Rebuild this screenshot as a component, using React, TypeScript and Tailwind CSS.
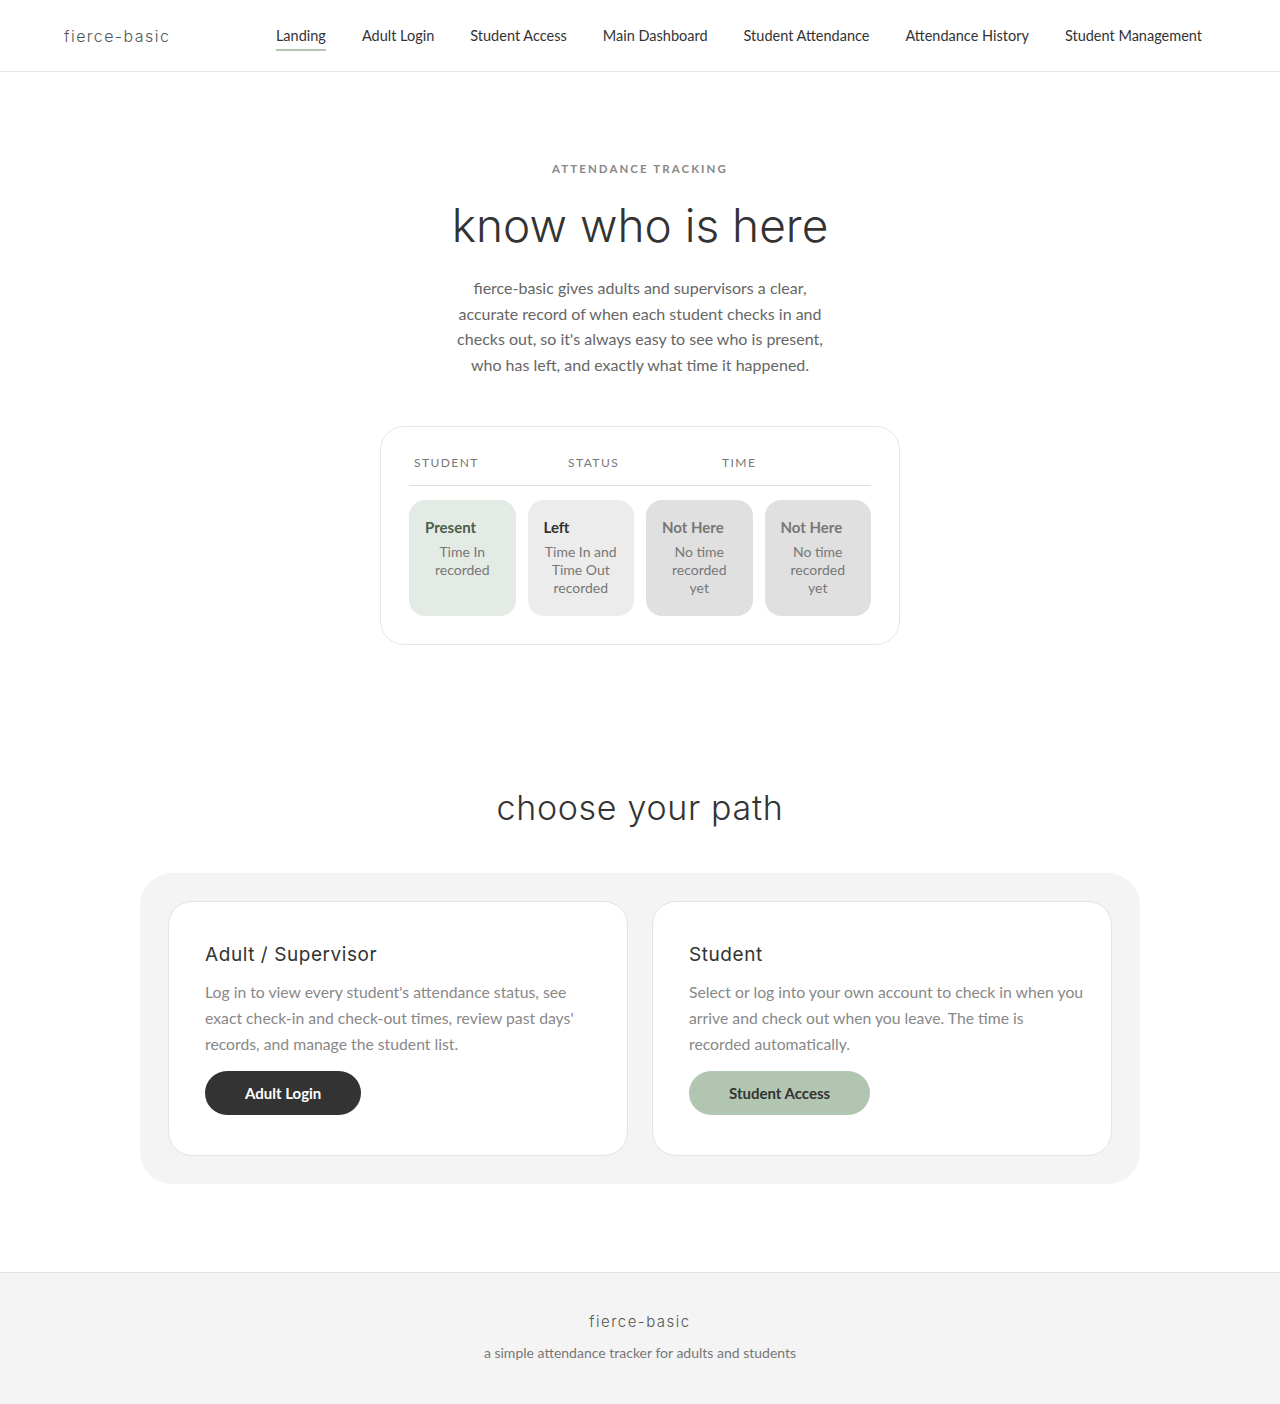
import React from 'react';

const body = "font-['Lato','Liberation_Sans',sans-serif]";
const head = "font-['Inter','Liberation_Sans',sans-serif]";

const navItems = [
  'Landing',
  'Adult Login',
  'Student Access',
  'Main Dashboard',
  'Student Attendance',
  'Attendance History',
  'Student Management',
];

const tiles = [
  { title: 'Present', desc: 'Time In recorded', box: 'bg-[#e4ebe4]', label: 'text-[#4b5e4b]' },
  { title: 'Left', desc: 'Time In and Time Out recorded', box: 'bg-[#ececec]', label: 'text-[#333]' },
  { title: 'Not Here', desc: 'No time recorded yet', box: 'bg-[#e0e0e0]', label: 'text-[#777]' },
  { title: 'Not Here', desc: 'No time recorded yet', box: 'bg-[#e0e0e0]', label: 'text-[#777]' },
];

const Header = () => (
  <header className="h-[72px] border-b border-[#e6e6e6] flex items-center justify-between pl-16 pr-[78px]">
    <div className={`${head} text-[16px] font-light tracking-[0.09em] text-[#555]`}>fierce-basic</div>
    <nav className="flex items-center gap-9">
      {navItems.map((item, i) => (
        <a
          key={item}
          className={`text-[14.5px] text-[#333] pt-[5px] pb-[3px] border-b-2 ${
            i === 0 ? 'border-[#b1c5b1]' : 'border-transparent'
          }`}
        >
          {item}
        </a>
      ))}
    </nav>
  </header>
);

const StatusCard = () => (
  <div className="mx-auto w-[520px] rounded-[24px] border border-[#e6e6e6] bg-white px-7 pt-[27px] pb-[28px] text-left">
    <div className="grid grid-cols-3 border-b border-[#e0e0e0] pb-[13px]">
      {['Student', 'Status', 'Time'].map((h) => (
        <div key={h} className="pl-[5px] text-[12px] uppercase tracking-[0.12em] text-[#777]">
          {h}
        </div>
      ))}
    </div>
    <div className="mt-[14px] grid grid-cols-4 gap-3">
      {tiles.map((t, i) => (
        <div key={i} className={`${t.box} rounded-[16px] px-4 pt-[16px] pb-[18px] h-[116px]`}>
          <div className={`text-[15px] font-bold ${t.label}`}>{t.title}</div>
          <p className="mt-[5px] text-[14px] leading-[18px] text-center text-[#777]">{t.desc}</p>
        </div>
      ))}
    </div>
  </div>
);

const PathCard = ({
  title,
  desc,
  button,
  btnClass,
}: {
  title: string;
  desc: string;
  button: string;
  btnClass: string;
}) => (
  <div className="rounded-[24px] border border-[#e4e4e4] bg-white pl-9 pr-6 pt-[39px] pb-[40px]">
    <h3 className={`${head} text-[19px] tracking-[0.03em] text-[#333]`}>{title}</h3>
    <p className="mt-[10px] text-[15.75px] leading-[26px] text-[#888]">{desc}</p>
    <button className={`mt-[14px] h-11 rounded-full px-10 text-[15px] font-bold ${btnClass}`}>{button}</button>
  </div>
);

export default function App() {
  return (
    <div className={`${body} bg-white min-h-[1404px] flex flex-col`}>
      <Header />
      <main className="flex-1">
        <section className="pt-[88px] text-center">
          <div className="text-[11.5px] font-bold uppercase tracking-[0.18em] text-[#888]">Attendance Tracking</div>
          <h1 className={`${head} mt-[18px] text-[46px] font-light leading-[60px] text-[#333]`}>know who is here</h1>
          <p className="mx-auto mt-[20px] w-[372px] text-[16px] leading-[25.6px] text-[#666]">
            fierce-basic gives adults and supervisors a clear, accurate record of when each student checks in and
            checks out, so it's always easy to see who is present, who has left, and exactly what time it happened.
          </p>
          <div className="mt-[48px]">
            <StatusCard />
          </div>
        </section>

        <section className="pt-[138px] pb-[88px]">
          <h2 className={`${head} text-center text-[34px] font-light leading-[50px] tracking-[0.02em] text-[#333]`}>
            choose your path
          </h2>
          <div className="mx-auto mt-[40px] w-[1000px] rounded-[32px] bg-[#f4f4f4] p-7">
            <div className="grid grid-cols-2 gap-6">
              <PathCard
                title="Adult / Supervisor"
                desc="Log in to view every student's attendance status, see exact check-in and check-out times, review past days' records, and manage the student list."
                button="Adult Login"
                btnClass="bg-[#333] text-white"
              />
              <PathCard
                title="Student"
                desc="Select or log into your own account to check in when you arrive and check out when you leave. The time is recorded automatically."
                button="Student Access"
                btnClass="bg-[#b1c5b1] text-[#333]"
              />
            </div>
          </div>
        </section>
      </main>
      <footer className="h-[132px] border-t border-[#e2e2e2] bg-[#f4f4f4] flex flex-col items-center pt-[38px]">
        <div className={`${head} text-[15px] font-light tracking-[0.1em] text-[#555]`}>fierce-basic</div>
        <div className="mt-[8px] text-[14px] text-[#777]">a simple attendance tracker for adults and students</div>
      </footer>
    </div>
  );
}
